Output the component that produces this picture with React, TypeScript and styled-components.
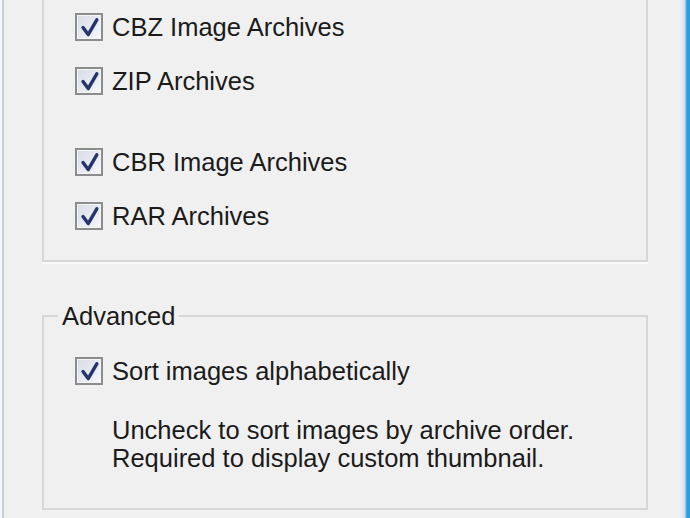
import styled, { createGlobalStyle } from 'styled-components';

const GlobalStyle = createGlobalStyle`
  html, body {
    margin: 0;
    padding: 0;
    background: #f0f0f0;
  }

  body {
    font-family: 'Liberation Sans', Arial, sans-serif;
    color: #1b1b1b;
  }
`;

interface ICheckRow {
  label: string;
  spaced?: boolean;
}

const Check = () => (
  <Box>
    <svg width="24" height="24" viewBox="0 0 24 24">
      <path
        d="M6 12.5 L11.2 19.6 L19.8 4.8"
        fill="none"
        stroke="#25346a"
        strokeWidth="3.4"
        strokeLinejoin="round"
        strokeLinecap="round"
      />
    </svg>
  </Box>
);

const CheckRow = ({ label, spaced }: ICheckRow) => (
  <Row $spaced={spaced}>
    <Check />
    <span>{label}</span>
  </Row>
);

const App = () => {
  return (
    <>
      <GlobalStyle />
      <Window>
        <LeftEdge />
        <Content>
          <Group $open>
            <CheckRow label="CBZ Image Archives" />
            <CheckRow label="ZIP Archives" />
            <CheckRow label="CBR Image Archives" spaced />
            <CheckRow label="RAR Archives" />
          </Group>

          <Group>
            <Legend>Advanced</Legend>
            <CheckRow label="Sort images alphabetically" />
            <Note>
              Uncheck to sort images by archive order.
              <br />
              Required to display custom thumbnail.
            </Note>
          </Group>
        </Content>
        <RightEdge />
      </Window>
    </>
  );
};

export default App;

const Window = styled.div`
  width: 690px;
  height: 518px;
  display: flex;
  overflow: hidden;
  background: #f0f0f0;
`;

const LeftEdge = styled.div`
  width: 4px;
  flex-shrink: 0;
  background: linear-gradient(to right, #f4f6f8 0, #f4f6f8 2px, #c3d0dc 2px, #c3d0dc 4px);
`;

const RightEdge = styled.div`
  width: 12px;
  flex-shrink: 0;
  background: linear-gradient(
    to right,
    #f0f0f0 0,
    #eceef4 3px,
    #e2e6f2 5px,
    #c9def0 7px,
    #5fb2e2 8px,
    #32a0dc 9px,
    #2f9ad8 12px
  );
`;

const Content = styled.div`
  flex: 1;
  display: flex;
  flex-direction: column;
  padding: 0 30px 0 38px;
`;

const Group = styled.fieldset<{ $open?: boolean }>`
  margin: ${({ $open }) => ($open ? '0 0 39px' : '0')};
  padding: 0 0 ${({ $open }) => ($open ? '17px' : '36px')};
  min-width: 0;
  border: 2px solid #d7d7d7;
  border-top: ${({ $open }) => ($open ? 'none' : '2px solid #d7d7d7')};
  box-shadow: ${({ $open }) => ($open ? '0 2px 0 #fbfbfb' : 'none')};
`;

const Legend = styled.legend`
  margin-left: 14px;
  padding: 0 4px;
  font-size: 25.5px;
  line-height: 30px;
  margin-bottom: 13px;
`;

const Row = styled.label<{ $spaced?: boolean }>`
  display: flex;
  align-items: center;
  gap: 9px;
  height: 54px;
  margin-top: ${({ $spaced }) => ($spaced ? '27px' : '0')};
  padding-left: 31px;
  font-size: 25.5px;
`;

const Box = styled.span`
  width: 24px;
  height: 24px;
  flex-shrink: 0;
  display: flex;
  border: 2px solid #8c8c8c;
  background: linear-gradient(135deg, #d6dce8 0%, #e7eaf1 55%, #f6f7f9 100%);
  box-shadow: inset 0 0 0 1px #f4f5f7;
`;

const Note = styled.div`
  margin: 18px 0 0 68px;
  font-size: 25.5px;
  line-height: 28px;
`;
